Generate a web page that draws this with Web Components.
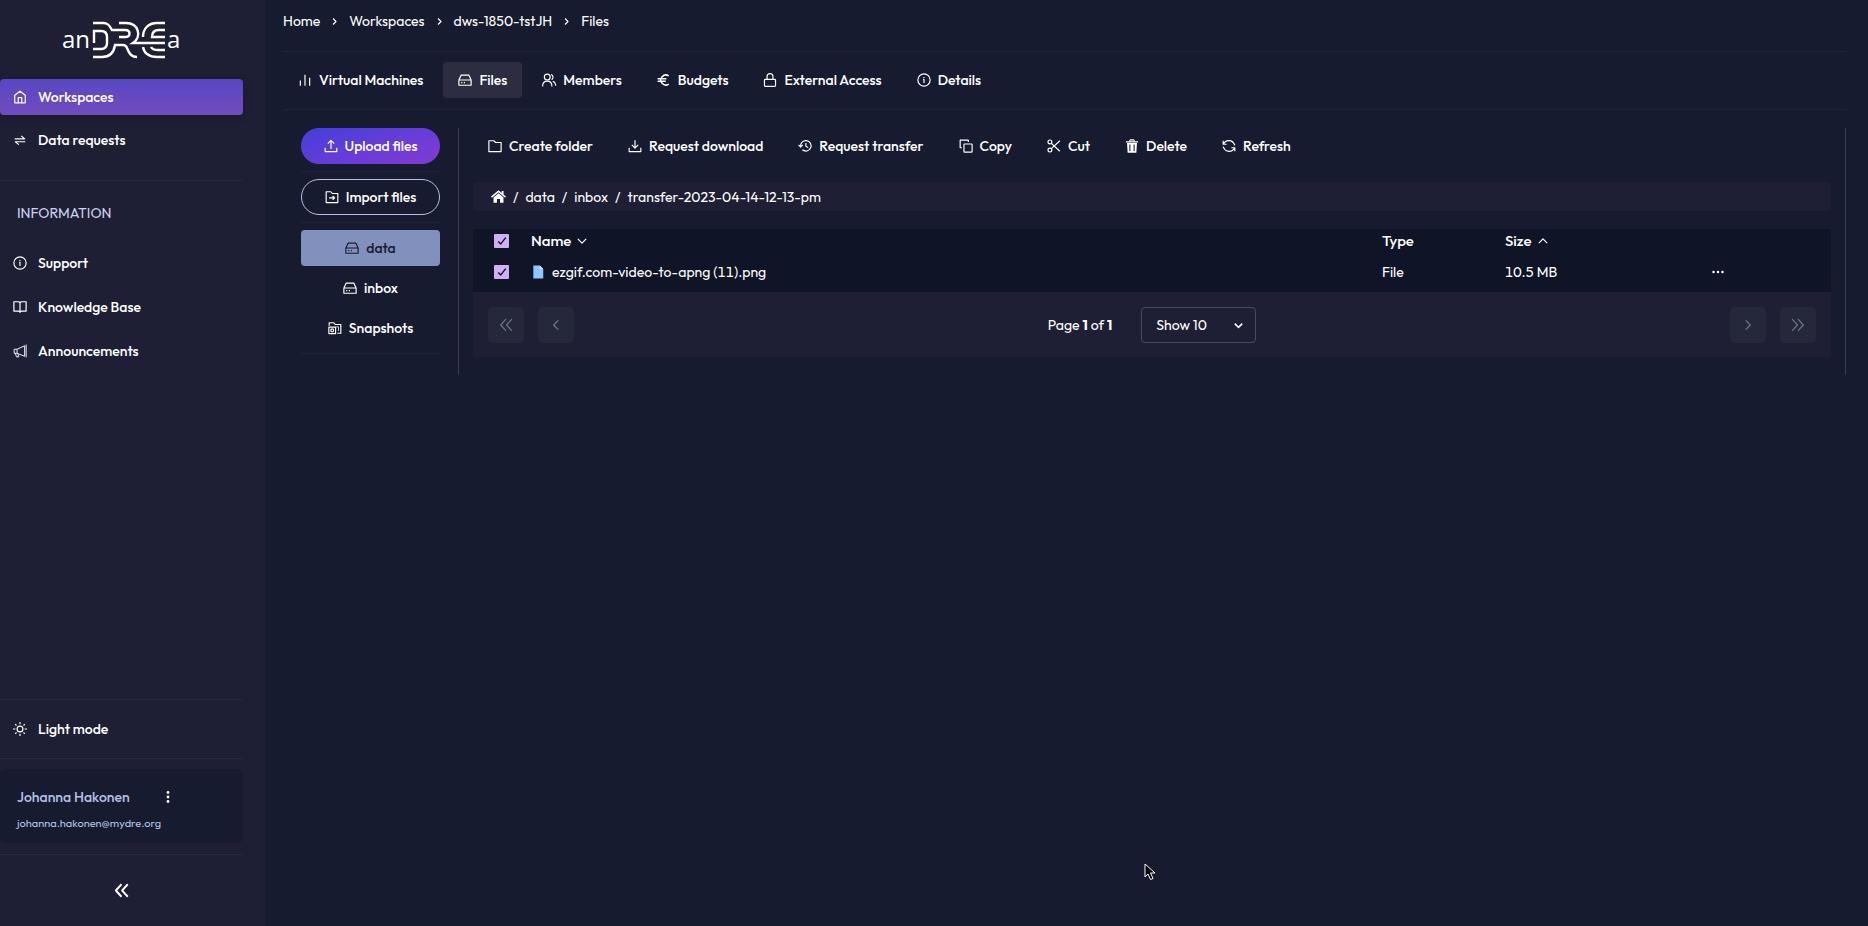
<!DOCTYPE html>
<html lang="en">
<head>
<meta charset="utf-8">
<title>Files</title>
<style>
    body {
        margin: 0;
        background: #171b2f;
        color: #fff;
        font: 500 14px/20px Outfit, Lato, "Liberation Sans", sans-serif;
    }
</style>
</head>
<body>
<workspace-app></workspace-app>

<script>
const ICONS = {
    home: '<path d="M3 22V9l9-7 9 7v13zM9 22v-9h6v9"/>',
    swap: '<path d="M3 10h17l-6-5M21 15H4l6 5"/>',
    info: '<circle cx="12" cy="12" r="10.500"/><path d="M10.500 11H12v6M12 7v1.500"/>',
    book: '<path d="M12 5v16M1.500 3H10l2 2 2-2h8.500v16H14l-2 2-2-2H1.500z"/>',
    horn: '<path d="M2 10v6h5l13 5V3L7 9H2zM7 9v7M4 16l2 6h4l-2-6M22.500 1v22" stroke-width="1.600"/>',
    sun: '<circle cx="12" cy="12" r="5"/><path d="M12 0v4M12 20v4M0 12h4M20 12h4M3.800 3.800l2.200 2.200M18 18l2.200 2.200M3.800 20.200l2.200-2.200M18 6l2.200-2.200"/>',
    dots: '<g fill="currentColor" stroke="none"><circle cx="12" cy="3" r="2.800"/><circle cx="12" cy="12" r="2.800"/><circle cx="12" cy="21" r="2.800"/></g>',
    more: '<g fill="currentColor" stroke="none"><circle cx="3" cy="12" r="2.500"/><circle cx="12" cy="12" r="2.500"/><circle cx="21" cy="12" r="2.500"/></g>',
    first: '<path d="M12 2L3 12l9 10M22 2l-9 10 9 10"/>',
    last: '<path d="M2 2l9 10-9 10M12 2l9 10-9 10"/>',
    prev: '<path d="M16 4l-8 8 8 8"/>',
    next: '<path d="M8 4l8 8-8 8"/>',
    up: '<path d="M2 17l10-10 10 10"/>',
    down: '<path d="M2 7l10 10L22 7"/>',
    bars: '<path d="M4 13v9M12 3v19M20 8v14"/>',
    drive: '<path d="M1.500 12l4-8.500h13l4 8.500M1.500 12h21v9h-21zM5.500 16.500h2M10 16.500h2"/>',
    users: '<circle cx="9" cy="7" r="5"/><path d="M1 23c0-6 3-9 8-9s8 3 8 9M15.500 2.500a5 5 0 0 1 1 9M18.500 14c3.500 1.500 5 4 5 8"/>',
    euro: '<path d="M20 5A8.500 8.500 0 1 0 20 19M1 10h15M1 14h14" stroke-width="2.600"/>',
    lock: '<rect x="2.500" y="11" width="19" height="12" rx="1.500"/><path d="M7 11V6a5 5 0 0 1 10 0v5"/>',
    upload: '<path d="M2 15v6.500h20V15M12 17V3M6.500 8L12 2.500 17.500 8"/>',
    download: '<path d="M2 15v6.500h20V15M12 2v13M6.500 10l5.500 5.500 5.500-5.500"/>',
    folder: '<path d="M1.500 21.500V3H10l3 3h9.500v15.500z"/>',
    moveIn: '<path d="M2 21.500V3h8l2.500 3H22v15.500zM7 13.500h9M13 10l3.500 3.500L13 17"/>',
    snapshot: '<path d="M2 8V3h8l2.500 3H22v15h-6"/><path d="M14 10h4v7" stroke-width="1.300"/><rect x="1.500" y="10.500" width="11.500" height="11"/><circle cx="7.200" cy="16" r="2.500"/>',
    history: '<path d="M4.500 13A9 9 0 1 1 7.500 18.500M1 10l3.500 4L8 10M13.500 7v5.500l4 2"/>',
    copy: '<rect x="8.500" y="8.500" width="14" height="14" rx="1"/><path d="M5 15H2V2h14v3"/>',
    cut: '<circle cx="5" cy="5" r="3.300"/><circle cx="5" cy="19" r="3.300"/><path d="M7.500 7.500L22 21M7.500 16.500L22 3"/>',
    trash: '<path d="M1.500 5h21M8 4l1-2.500h6L16 4"/><path fill="currentColor" stroke="none" fill-rule="evenodd" d="M3.500 7h17l-1 16.500h-15zM7.500 9.500v11h1.800v-11zm7.200 0v11h1.800v-11z"/>',
    refresh: '<path d="M2 3v6h6M2.500 9C6 1 18 0 22 11M22 21v-6h-6M21.500 15C18 23 6 24 2 13"/>',
    house: '<g fill="currentColor" stroke="none"><path d="M0 12L12 2l5 4.200V3h3v5.700L24 12l-1.500 1.800L12 5 1.500 13.800z"/><path d="M4 13.500l8-6.700 8 6.700V22h-5.500v-6h-5v6H4z"/></g>',
    file: '<path fill="#8cc8ff" stroke="none" d="M4 1h11l6 6v16H4z"/><path fill="#d4ebff" stroke="none" d="M15 1l6 6h-6z"/>',
    check: '<path d="M3 13l6 6L21 4" stroke-width="3.500"/>'
};

class AppIcon extends HTMLElement {
    constructor() {
        super();
        this.attachShadow({ mode: 'open' });
    }

    connectedCallback() {
        const size = this.getAttribute('size') || 14;
        const weight = this.getAttribute('weight') || 2;
        this.shadowRoot.innerHTML = `
            <style>
                :host { display: inline-flex; flex: none; }
                svg {
                    display: block;
                    fill: none;
                    stroke: currentColor;
                    stroke-linejoin: round;
                    overflow: visible;
                }
            </style>
            <svg width="${size}" height="${size}" viewBox="0 0 24 24" stroke-width="${weight}" aria-hidden="true">${ICONS[this.getAttribute('name')]}</svg>
        `;
    }
}
customElements.define('app-icon', AppIcon);

class AppLogo extends HTMLElement {
    constructor() {
        super();
        this.attachShadow({ mode: 'open' });
        this.shadowRoot.innerHTML = `
            <style>
                :host { display: block; height: 38px; }
                svg { display: block; margin: 0 auto; }
                text { font: 500 24px "Open Sans", sans-serif; fill: #fff; }
                path { fill: none; stroke: #fff; stroke-width: 2.400; }
            </style>
            <svg width="122" height="38" viewBox="-1 0 122 38" role="img" aria-label="anDREa">
                <text x="0" y="27">an</text>
                <path d="M31 2h10c6 0 7 4 9 7h13c6 0 6 7 0 7h-6"/>
                <path d="M32 22V10h7q6 0 6 6v6q0 6-6 6h-8"/>
                <path d="M31 36h9c8 0 12-5 13-12h8q3 0 4 3c2 5 4 9 10 9"/>
                <path d="M57 2h7c13 0 16 14 7 20h32"/>
                <path d="M103 2h-8c-9 0-14 6-14 14M103 9h-6c-5 0-7 3-7 7h13M81 26c1 6 6 10 14 10h8M89 26c1 2 3 3 7 3h7"/>
                <text x="105" y="27">a</text>
            </svg>
        `;
    }
}
customElements.define('app-logo', AppLogo);

class NavItem extends HTMLElement {
    constructor() {
        super();
        this.attachShadow({ mode: 'open' });
    }

    connectedCallback() {
        this.shadowRoot.innerHTML = `
            <style>
                :host { display: block; }
                a {
                    display: flex;
                    align-items: center;
                    gap: 11px;
                    height: 36px;
                    padding: 0 13px;
                    border-radius: 4px;
                    color: #fff;
                    text-decoration: none;
                }
                :host([active]) a {
                    background: linear-gradient(#5846c3, #724cbd);
                    box-shadow: 0 2px 8px rgba(0, 0, 0, 0.2);
                }
            </style>
            <a href="#"><app-icon name="${this.getAttribute('icon')}"></app-icon><slot></slot></a>
        `;
    }
}
customElements.define('nav-item', NavItem);

class SideBar extends HTMLElement {
    constructor() {
        super();
        this.attachShadow({ mode: 'open' });
        this.shadowRoot.innerHTML = `
            <style>
                :host {
                    display: flex;
                    flex-direction: column;
                    box-sizing: border-box;
                    padding-right: 22px;
                    background: #1e1f35;
                }
                app-logo { margin: 21px 0 20px; }
                nav { display: grid; gap: 8px; }
                hr { width: 100%; height: 1px; margin: 0; border: 0; background: #272940; }
                h2 {
                    margin: 22px 0;
                    padding: 0 17px;
                    color: #ccd3ee;
                    font-size: 14px;
                    font-weight: 400;
                }
                .main-nav { gap: 7px; margin-bottom: 22px; }
                .bottom { margin-top: auto; }
                .bottom nav-item { margin: 11px 0; }
                .user {
                    display: grid;
                    grid-template-columns: 145px auto;
                    align-items: center;
                    justify-content: start;
                    row-gap: 6px;
                    margin: 10px 0 11px;
                    padding: 18px 17px 10px;
                    border-radius: 6px;
                    background: #171b2f;
                    color: #b4c1e6;
                }
                .user small { grid-column: 1 / 3; font-size: 11px; font-weight: 400; }
                button {
                    display: flex;
                    justify-content: center;
                    padding: 0;
                    border: 0;
                    background: none;
                    color: #fff;
                }
                .collapse { width: 100%; padding: 28px 0; }
            </style>
            <app-logo></app-logo>
            <nav class="main-nav">
                <nav-item icon="home" active>Workspaces</nav-item>
                <nav-item icon="swap">Data requests</nav-item>
            </nav>
            <hr>
            <h2>INFORMATION</h2>
            <nav>
                <nav-item icon="info">Support</nav-item>
                <nav-item icon="book">Knowledge Base</nav-item>
                <nav-item icon="horn">Announcements</nav-item>
            </nav>
            <div class="bottom">
                <hr>
                <nav-item icon="sun">Light mode</nav-item>
                <hr>
                <div class="user">
                    <span>Johanna Hakonen</span>
                    <button aria-label="Account menu"><app-icon name="dots" size="12"></app-icon></button>
                    <small>johanna.hakonen@mydre.org</small>
                </div>
                <hr>
                <button class="collapse" aria-label="Collapse menu"><app-icon name="first" size="15" weight="3"></app-icon></button>
            </div>
        `;
    }
}
customElements.define('side-bar', SideBar);

class TabItem extends HTMLElement {
    constructor() {
        super();
        this.attachShadow({ mode: 'open' });
    }

    connectedCallback() {
        this.shadowRoot.innerHTML = `
            <style>
                :host { display: block; }
                a {
                    display: flex;
                    align-items: center;
                    gap: 7px;
                    height: 36px;
                    padding: 0 15px;
                    border-radius: 4px;
                    color: #fff;
                    text-decoration: none;
                    white-space: nowrap;
                }
                :host([active]) a { background: #2c2d40; }
            </style>
            <a href="#"><app-icon name="${this.getAttribute('icon')}"></app-icon><slot></slot></a>
        `;
    }
}
customElements.define('tab-item', TabItem);

// Variants: plain (toolbar), primary, outline, folder, page
class AppButton extends HTMLElement {
    constructor() {
        super();
        this.attachShadow({ mode: 'open' });
    }

    connectedCallback() {
        const label = this.getAttribute('label');
        this.shadowRoot.innerHTML = `
            <style>
                :host { display: block; }
                button {
                    display: flex;
                    align-items: center;
                    justify-content: center;
                    gap: 7px;
                    box-sizing: border-box;
                    width: 100%;
                    height: 36px;
                    padding: 0;
                    border: 0;
                    border-radius: 4px;
                    background: none;
                    color: #fff;
                    font: inherit;
                    white-space: nowrap;
                }
                :host([variant="primary"]) button {
                    border-radius: 18px;
                    background: linear-gradient(160deg, #443fdb, #843ad4);
                }
                :host([variant="outline"]) button {
                    border: 1px solid #b4c1e6;
                    border-radius: 18px;
                }
                :host([selected]) button { background: #8290bd; color: #171b2f; }
                :host([variant="page"]) button {
                    width: 36px;
                    border-radius: 5px;
                    background: #25273a;
                    color: #73758a;
                }
            </style>
            <button${label ? ` aria-label="${label}"` : ''}>
                <app-icon name="${this.getAttribute('icon')}"></app-icon><slot></slot>
            </button>
        `;
    }
}
customElements.define('app-button', AppButton);

class CheckBox extends HTMLElement {
    constructor() {
        super();
        this.attachShadow({ mode: 'open' });
    }

    connectedCallback() {
        this.shadowRoot.innerHTML = `
            <style>
                :host { display: block; }
                label { display: grid; width: 15px; height: 14px; place-items: center; }
                input, app-icon { grid-area: 1 / 1; }
                input {
                    appearance: none;
                    width: 15px;
                    height: 14px;
                    margin: 0;
                    border-radius: 1px;
                    background: #cfb0f5;
                }
                app-icon { color: #10142a; pointer-events: none; }
                input:not(:checked) + app-icon { visibility: hidden; }
            </style>
            <label><input type="checkbox" checked aria-label="${this.getAttribute('label')}"><app-icon name="check" size="10"></app-icon></label>
        `;
    }
}
customElements.define('check-box', CheckBox);

class FileTable extends HTMLElement {
    constructor() {
        super();
        this.attachShadow({ mode: 'open' });
        this.shadowRoot.innerHTML = `
            <style>
                :host { display: block; background: #101427; }
                table {
                    width: 100%;
                    border-collapse: collapse;
                    table-layout: fixed;
                    font-variant-numeric: tabular-nums;
                }
                th, td { height: 23px; padding: 0 8px; text-align: left; vertical-align: middle; }
                td { height: 40px; font-weight: 400; }
                th { font-size: 15px; font-weight: 500; }
                .check { width: 29px; padding-left: 21px; padding-right: 0; }
                .type { width: 107px; }
                .size { width: 191px; }
                .actions { width: 111px; }
                button {
                    display: flex;
                    align-items: center;
                    padding: 0;
                    border: 0;
                    background: none;
                    color: #fff;
                    font: inherit;
                    gap: 6px;
                }
                .file { display: flex; align-items: center; gap: 7px; }
            </style>
            <table>
                <thead>
                    <tr>
                        <th class="check"><check-box label="Select all"></check-box></th>
                        <th><button>Name <app-icon name="down" size="10" weight="3"></app-icon></button></th>
                        <th class="type">Type</th>
                        <th class="size"><button>Size <app-icon name="up" size="10" weight="3"></app-icon></button></th>
                        <th class="actions"></th>
                    </tr>
                </thead>
                <tbody>
                    <tr>
                        <td class="check"><check-box label="Select file"></check-box></td>
                        <td><span class="file"><app-icon name="file"></app-icon>ezgif.com-video-to-apng (11).png</span></td>
                        <td>File</td>
                        <td>10.5 MB</td>
                        <td><button aria-label="File actions"><app-icon name="more" size="12"></app-icon></button></td>
                    </tr>
                </tbody>
            </table>
        `;
    }
}
customElements.define('file-table', FileTable);

class TablePager extends HTMLElement {
    constructor() {
        super();
        this.attachShadow({ mode: 'open' });
        this.shadowRoot.innerHTML = `
            <style>
                :host {
                    display: flex;
                    align-items: center;
                    justify-content: space-between;
                    padding: 15px 15px 14px;
                    background: #1e1f35;
                    font-weight: 400;
                }
                div { display: flex; align-items: center; gap: 14px; }
                .middle { gap: 29px; }
                label { display: grid; align-items: center; }
                select, label app-icon { grid-area: 1 / 1; }
                select {
                    appearance: none;
                    width: 115px;
                    height: 36px;
                    padding: 0 14px;
                    border: 1px solid #484a60;
                    border-radius: 4px;
                    background: #1e1f35;
                    color: #fff;
                    font: inherit;
                }
                label app-icon { justify-self: end; margin-right: 13px; pointer-events: none; }
            </style>
            <div>
                <app-button variant="page" icon="first" label="First page"></app-button>
                <app-button variant="page" icon="prev" label="Previous page"></app-button>
            </div>
            <div class="middle">
                <span>Page <b>1</b> of <b>1</b></span>
                <label>
                    <select aria-label="Rows per page"><option>Show 10</option></select>
                    <app-icon name="down" size="9" weight="4"></app-icon>
                </label>
            </div>
            <div>
                <app-button variant="page" icon="next" label="Next page"></app-button>
                <app-button variant="page" icon="last" label="Last page"></app-button>
            </div>
        `;
    }
}
customElements.define('table-pager', TablePager);

class FileBrowser extends HTMLElement {
    constructor() {
        super();
        this.attachShadow({ mode: 'open' });
        this.shadowRoot.innerHTML = `
            <style>
                :host {
                    display: grid;
                    grid-template-columns: 139px minmax(0, 1fr);
                    gap: 18px;
                    margin-left: 18px;
                }
                hr { width: 100%; height: 1px; margin: 0; border: 0; background: #202439; }
                aside { display: flex; flex-direction: column; }
                aside hr { margin: 7px 0; }
                .folders { display: grid; gap: 4px; }
                .panel {
                    padding: 0 14px 18px;
                    border: solid #3a3d50;
                    border-width: 0 1px;
                }
                .tools { display: flex; gap: 35px; padding: 0 15px; }
                .path {
                    display: flex;
                    align-items: center;
                    gap: 7px;
                    height: 29px;
                    margin: 18px 0;
                    padding: 0 18px;
                    border-radius: 4px;
                    background: #1e1f35;
                    font-weight: 400;
                }
                .path a { display: flex; color: #fff; text-decoration: none; }
            </style>
            <aside>
                <app-button variant="primary" icon="upload">Upload files</app-button>
                <hr>
                <app-button variant="outline" icon="moveIn">Import files</app-button>
                <hr>
                <div class="folders">
                    <app-button variant="folder" icon="drive" selected>data</app-button>
                    <app-button variant="folder" icon="drive">inbox</app-button>
                    <app-button variant="folder" icon="snapshot">Snapshots</app-button>
                </div>
                <hr>
            </aside>
            <section class="panel">
                <div class="tools">
                    <app-button icon="folder">Create folder</app-button>
                    <app-button icon="download">Request download</app-button>
                    <app-button icon="history">Request transfer</app-button>
                    <app-button icon="copy">Copy</app-button>
                    <app-button icon="cut">Cut</app-button>
                    <app-button icon="trash">Delete</app-button>
                    <app-button icon="refresh">Refresh</app-button>
                </div>
                <nav class="path" aria-label="Folder">
                    <a href="#" aria-label="Root"><app-icon name="house" size="15"></app-icon></a>
                    <span>/</span><a href="#">data</a>
                    <span>/</span><a href="#">inbox</a>
                    <span>/</span><a href="#">transfer-2023-04-14-12-13-pm</a>
                </nav>
                <file-table></file-table>
                <table-pager></table-pager>
            </section>
        `;
    }
}
customElements.define('file-browser', FileBrowser);

class WorkspaceApp extends HTMLElement {
    constructor() {
        super();
        this.attachShadow({ mode: 'open' });
        this.shadowRoot.innerHTML = `
            <style>
                :host {
                    display: grid;
                    grid-template-columns: 265px minmax(0, 1fr);
                    min-height: 100vh;
                }
                main { padding: 0 22px 0 18px; }
                hr { height: 1px; margin: 0; border: 0; background: #202439; }
                .crumbs {
                    display: flex;
                    align-items: center;
                    gap: 10px;
                    height: 42px;
                    margin-bottom: 9px;
                    font-weight: 400;
                }
                .crumbs a { color: #fff; text-decoration: none; }
                .tabs { display: flex; gap: 5px; padding: 10px 0 11px; }
                file-browser { margin-top: 18px; }
                .pointer { position: absolute; left: 1144px; top: 863px; }
            </style>
            <side-bar></side-bar>
            <main>
                <nav class="crumbs" aria-label="Breadcrumb">
                    <a href="#">Home</a><app-icon name="next" size="9" weight="3"></app-icon>
                    <a href="#">Workspaces</a><app-icon name="next" size="9" weight="3"></app-icon>
                    <a href="#">dws-1850-tstJH</a><app-icon name="next" size="9" weight="3"></app-icon>
                    <a href="#">Files</a>
                </nav>
                <hr>
                <nav class="tabs">
                    <tab-item icon="bars">Virtual Machines</tab-item>
                    <tab-item icon="drive" active>Files</tab-item>
                    <tab-item icon="users">Members</tab-item>
                    <tab-item icon="euro">Budgets</tab-item>
                    <tab-item icon="lock">External Access</tab-item>
                    <tab-item icon="info">Details</tab-item>
                </nav>
                <hr>
                <file-browser></file-browser>
            </main>
            <svg class="pointer" width="12" height="18" viewBox="0 0 12 18" aria-hidden="true">
                <path d="M1 1v13l3-3 2.500 5.500 2.500-1L6.500 10H11z" fill="#000" stroke="#fff"/>
            </svg>
        `;
    }
}
customElements.define('workspace-app', WorkspaceApp);
</script>
</body>
</html>
